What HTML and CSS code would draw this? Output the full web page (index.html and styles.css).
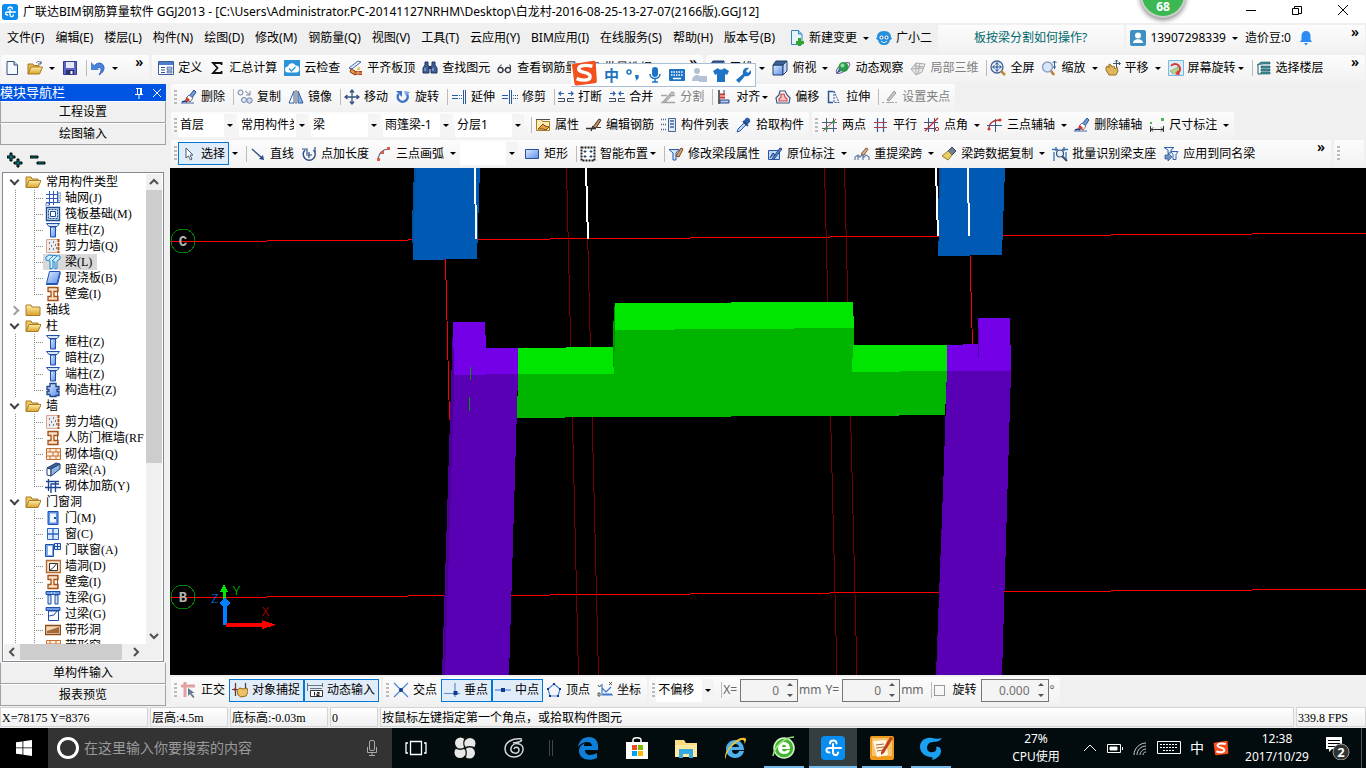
FILE: index.html
```html
<!DOCTYPE html>
<html lang="zh-CN">
<head>
  <meta charset="UTF-8" />
  <meta name="viewport" content="width=device-width, initial-scale=1.0" />
  <title>广联达BIM钢筋算量软件 GGJ2013</title>
  <link rel="stylesheet" href="styles.css">
</head>
<body>
  <svg class="sprite" aria-hidden="true">
    <defs>
      <linearGradient id="gBlue" x1="0" y1="0" x2="1" y2="1"><stop offset="0" stop-color="#dfeaff"/><stop offset="1" stop-color="#5b8fe8"/></linearGradient>
      <linearGradient id="gGold" x1="0" y1="0" x2="0" y2="1"><stop offset="0" stop-color="#fff0a8"/><stop offset="1" stop-color="#d9a02c"/></linearGradient>
    </defs>
    <!-- file -->
    <symbol id="i-new" viewBox="0 0 16 16"><path d="M3 1.500h7l3.500 3.500v9.500H3z" fill="#f5f8fd" stroke="#33507e"/><path d="M10 1.500v3.500h3.500" fill="#c8d7ee" stroke="#33507e"/></symbol>
    <symbol id="i-open" viewBox="0 0 16 16"><path d="M1 14V4h5l1 1.500h5V8" fill="#e8b850" stroke="#a87820"/><path d="M1 14l3-7h11.500l-3 7z" fill="url(#gGold)" stroke="#a87820"/><path d="M9 3c2-2.500 4-1.500 5 .5m0-2.500v3h-3" fill="none" stroke="#4c5f7c"/></symbol>
    <symbol id="i-save" viewBox="0 0 16 16"><path d="M1.500 1.500h13v13h-13z" fill="#5a63c8" stroke="#343a8c"/><path d="M4 2h8v6H4z" fill="#e4e8fb"/><path d="M4 10h8v4H4z" fill="#2c3270"/><path d="M8.500 11h2v3h-2z" fill="#fff"/></symbol>
    <symbol id="i-undo" viewBox="0 0 16 16"><path d="M4 6c4-5 10-3 10 2 0 3-2 5-5 7 4-6 2-9-2.500-6.500" fill="#4b83d8" stroke="#2f64ba"/><path d="M1 2v8h8z" fill="#4b83d8"/></symbol>
    <!-- common tools -->
    <symbol id="i-define" viewBox="0 0 16 16"><path d="M.5 1.500h15v13H.5z" fill="#fff" stroke="#3c5f99"/><path d="M1 2h14v3H1z" fill="#4a7cc9"/><path d="M3 7.500h4M3 10h4M3 12.500h4" stroke="#33508a"/><path d="M9 7h5v3H9zM9 11h5v2H9z" fill="#a8bfe6" stroke="#33508a" stroke-width=".6"/></symbol>
    <symbol id="i-sum" viewBox="0 0 16 16"><path d="M12.500 5V3H4l4.500 5L4 13h8.500v-2" fill="none" stroke="#111" stroke-width="1.800"/></symbol>
    <symbol id="i-cloud" viewBox="0 0 16 16"><path d="M0 0h16v16H0z" fill="#2d93d8"/><path d="M4 12.500a3 3 0 0 1 0-6 4 4 0 0 1 7.500-1 3.500 3.500 0 0 1 .5 7z" fill="#fff"/><path d="M5 8.500l2.500 2.500 4-4" fill="none" stroke="#2d93d8" stroke-width="1.300"/></symbol>
    <symbol id="i-flush" viewBox="0 0 16 16"><path d="M2 8l9-7 3 1-9 7z" fill="#e6eefc" stroke="#4669a8"/><path d="M4 9l4 2v4l-5-3z" fill="#e9a13c" stroke="#8d3b14"/><path d="M8 11h7v4H8z" fill="#b4441c"/><path d="M8 13h7M11 11v4" stroke="#ffd9a0" stroke-width=".7"/><path d="M10 8l3-1v3h-3z" fill="#f4c44c"/></symbol>
    <symbol id="i-find" viewBox="0 0 16 16"><path d="M3 2h3v3l1 2v6H1V8l2-3zM10 2h3v3l2 3v5H9V7l1-2z" fill="#3c5f96" stroke="#20365e"/><path d="M7 6h2v3H7z" fill="#20365e"/><path d="M3 8v3M11 8v3" stroke="#a8c4ee"/></symbol>
    <symbol id="i-glasses" viewBox="0 0 16 16"><circle cx="3.500" cy="10" r="2.500" fill="#fff" stroke="#303845" stroke-width="1.300"/><circle cx="11" cy="10" r="2.500" fill="#fff" stroke="#303845" stroke-width="1.300"/><path d="M6 10h2.500M2 8c1-3 2-3 3-3M13 9c1-3 1-4-1-4" fill="none" stroke="#303845"/></symbol>
    <symbol id="i-batch" viewBox="0 0 16 16"><path d="M1 3h5M8 3h7M1 8h5M8 8h7M1 13h5M8 13h7" stroke="#6a7484" stroke-width="2"/></symbol>
    <symbol id="i-box" viewBox="0 0 16 16"><path d="M1 5h10v10H1z" fill="url(#gBlue)" stroke="#23406e"/><path d="M1 5l3-4h11l-4 4z" fill="#3d5f94" stroke="#23406e"/><path d="M11 5l4-4v10l-4 4z" fill="#c4d8f5" stroke="#23406e"/></symbol>
    <symbol id="i-orbit" viewBox="0 0 16 16"><ellipse cx="8" cy="8" rx="8" ry="3.500" transform="rotate(-35 8 8)" fill="none" stroke="#7b5a9a"/><circle cx="8.500" cy="7" r="5" fill="#2c9a4c"/><circle cx="7.500" cy="5.500" r="2" fill="#8fe0a0"/><path d="M1 14l5-3-2-2z" fill="#30549a"/></symbol>
    <symbol id="i-local" viewBox="0 0 16 16"><path d="M1 9l5-6 9 1-3 8-6 3z" fill="#ececec" stroke="#aaa"/><path d="M6 3v12M10 3L8 14M2 9l11-1M4 6l10 1" fill="none" stroke="#aaa"/></symbol>
    <symbol id="i-full" viewBox="0 0 16 16"><circle cx="7" cy="7" r="6" fill="#edf4ff" stroke="#44618e" stroke-width="1.300"/><path d="M7 3v8M3 7h8M5.500 4.500L7 2.500l1.500 2M5.500 9.500L7 11.500l1.500-2M4.500 5.500L2.500 7l2 1.500M9.500 5.500l2 1.500-2 1.500" fill="none" stroke="#1f4e96"/><path d="M11 11l4 4" stroke="#c58a38" stroke-width="2.500"/></symbol>
    <symbol id="i-zoom" viewBox="0 0 16 16"><circle cx="6.500" cy="7" r="5" fill="#d7e7fb" stroke="#8ba2c4" stroke-width="1.500"/><path d="M10 11l3 4" stroke="#c07a30" stroke-width="2.500"/><path d="M13.500 1v8M11.500 3l2-2 2 2M12 7h3" fill="none" stroke="#33588f"/></symbol>
    <symbol id="i-pan" viewBox="0 0 16 16"><path d="M1 7l2-1 1 2V4l2 1 1 2 2-1 1 3 2-2 1 4-2 4H4L1 10z" fill="#dfb65a" stroke="#9a7428"/><path d="M11.500 0v8M8 3.500h7M10 1.500L11.500 0 13 1.500M14 2l1.500 1.500L14 5" fill="none" stroke="#44536e"/></symbol>
    <symbol id="i-screen" viewBox="0 0 16 16"><path d="M.5.5h15v15H.5z" fill="#d9edf9" stroke="#7ab6dd"/><path d="M3 6a5 5 0 1 1 7 7" fill="none" stroke="#d63a34" stroke-width="2"/><path d="M2 11l8-4v4l-5 3z" fill="#b8d48a" stroke="#7fa050" stroke-width=".6"/><path d="M7 14.500l5 .5-2-5z" fill="#d63a34"/></symbol>
    <symbol id="i-floor" viewBox="0 0 16 16"><path d="M1 5l4-3h9v2H7zM5 6h9v2H5zM5 9h9v2H5zM5 12h9v2H5z" fill="#3f8f98" stroke="#205c66" stroke-width=".6"/><path d="M2 5v9h3" fill="none" stroke="#205c66"/></symbol>
    <!-- account -->
    <symbol id="i-change" viewBox="0 0 16 16"><path d="M2.500.5h7l3.500 3.500v10.500H2.500z" fill="#e4f3fd" stroke="#3585bd"/><path d="M9.500.5V4H13" fill="#9fd0ee" stroke="#3585bd"/><path d="M9 8h3v3h3v3h-3v2H9v-2H7v-3h2z" fill="#34a52a"/></symbol>
    <symbol id="i-helper" viewBox="0 0 16 16"><path d="M8 1c5 0 7 3 7 6l1 2-2 1c-1 4-3 5-6 5s-5-1-6-5L0 9l1-2c0-3 2-6 7-6z" fill="#2590dd"/><circle cx="5.500" cy="7.500" r="2" fill="#fff"/><circle cx="10.500" cy="7.500" r="2" fill="#fff"/><circle cx="5.500" cy="7.500" r="1" fill="#12508a"/><circle cx="10.500" cy="7.500" r="1" fill="#12508a"/><path d="M5 11c2 2 4 2 6 0" fill="none" stroke="#fff"/></symbol>
    <symbol id="i-user" viewBox="0 0 16 16"><rect width="16" height="16" rx="2" fill="#3e8fc4"/><circle cx="8" cy="5.500" r="3" fill="#fff"/><path d="M3 13c0-5 10-5 10 0z" fill="#fff"/></symbol>
    <symbol id="i-bell" viewBox="0 0 16 16"><path d="M8 1c3 0 4.500 2 4.500 5v3.500L14 12H2l1.500-2.500V6C3.500 3 5 1 8 1z" fill="#2d8cf0"/><path d="M6 13h4l-2 2.500z" fill="#2d8cf0"/></symbol>
    <!-- edit -->
    <symbol id="i-erase" viewBox="0 0 16 16"><path d="M8 7l5-6 2 2-4 6z" fill="#6d9bdc" stroke="#2c5595"/><path d="M5 9l3-3 4 3-3 4z" fill="#fff" stroke="#60708a"/><path d="M4 11l3 2 2-2-3-3z" fill="#d63a2a"/><path d="M0 14h13" stroke="#7c95bd" stroke-width="1.500"/><path d="M1 13l3-1 2 1" fill="none" stroke="#23447c" stroke-width="1.500"/></symbol>
    <symbol id="i-copy" viewBox="0 0 16 16"><circle cx="3.500" cy="3.500" r="2.500" fill="#eef3fb" stroke="#6a7f9f"/><circle cx="7" cy="11" r="2.500" fill="#dfe8f6" stroke="#6a7f9f"/><circle cx="12.500" cy="11.500" r="2.700" fill="#cfdcef" stroke="#6a7f9f"/><path d="M8 2l5 4M13 2v4H9" fill="none" stroke="#7a8699"/></symbol>
    <symbol id="i-mirror" viewBox="0 0 16 16"><path d="M6 2v12H1z" fill="#fff" stroke="#2f599c"/><path d="M10 2v12h5z" fill="#8db1ea" stroke="#2f599c"/><path d="M8 1v14" stroke="#555"/></symbol>
    <symbol id="i-move" viewBox="0 0 16 16"><path d="M8 1v14M1 8h14M6 3.500L8 1l2 2.500M6 12.500L8 15l2-2.500M3.500 6L1 8l2.500 2M12.500 6L15 8l-2.500 2" fill="none" stroke="#35547f" stroke-width="1.300"/></symbol>
    <symbol id="i-rotate" viewBox="0 0 16 16"><path d="M3.500 5a5 5 0 1 0 8-.5" fill="none" stroke="#3f74c6" stroke-width="2.500"/><path d="M1 2h6v6z" fill="#3f74c6"/><path d="M9 2l6 1-4 4z" fill="#7aa4e4"/></symbol>
    <symbol id="i-extend" viewBox="0 0 16 16"><path d="M1 6.500h6M1 9.500h6" stroke="#2b579b"/><path d="M8 6.500h3M8 9.500h3" stroke="#2b579b" stroke-dasharray="1 1"/><path d="M12.500 1v14M14.500 1v14" stroke="#2b579b"/></symbol>
    <symbol id="i-trim" viewBox="0 0 16 16"><path d="M0 6.500h6M0 9.500h6" stroke="#2b579b"/><path d="M7.500 1v14M9.500 1v14" stroke="#2b579b"/><path d="M11 6.500h5M11 9.500h5" stroke="#2b579b" stroke-dasharray="1 1"/></symbol>
    <symbol id="i-break" viewBox="0 0 16 16"><path d="M1 4.500h5M10 4.500h5M3 2.500l-2 2 2 2M13 2.500l2 2-2 2" fill="none" stroke="#2f5fb0" stroke-width="1.200"/><path d="M0 9.500h6.500v3H0M16 9.500H9.500v3H16" fill="none" stroke="#3b4963"/></symbol>
    <symbol id="i-merge" viewBox="0 0 16 16"><path d="M1 4.500h5M10 4.500h5M4 2.500l2 2-2 2M12 2.500l-2 2 2 2" fill="none" stroke="#2f5fb0" stroke-width="1.200"/><path d="M0 9.500h6.500v3H0M16 9.500H9.500v3H16" fill="none" stroke="#3b4963"/></symbol>
    <symbol id="i-split" viewBox="0 0 16 16"><path d="M1 6.500h6M1 13.500h14M10 6.500h5M3 13L12 3l2 1-9 9" fill="none" stroke="#a5a5a5" stroke-width="1.400"/></symbol>
    <symbol id="i-align" viewBox="0 0 16 16"><path d="M3 1v14" stroke="#111" stroke-width="1.300"/><path d="M4 5.500h5M4 8.500h5" stroke="#d22f2f" stroke-width="2"/><path d="M4 11h9v3H4z" fill="#b8cdf0" stroke="#22438a"/><path d="M8 1v4" stroke="#22438a"/></symbol>
    <symbol id="i-offset" viewBox="0 0 16 16"><path d="M5 2h5l2 4 3 3-1 5H2l-1-5 3-3z" fill="#fff" stroke="#35537f" stroke-width="1.200"/><path d="M6 5h3l1 3 2 2v2H4v-2l2-2z" fill="#f8c8c8" stroke="#d04343" stroke-width="1.200"/></symbol>
    <symbol id="i-stretch" viewBox="0 0 16 16"><path d="M7 2.500H2.500v11H7" fill="none" stroke="#2c5595" stroke-width="1.500"/><path d="M8 2l5 11.500H8z" fill="none" stroke="#2c5595" stroke-dasharray="2 1"/></symbol>
    <symbol id="i-pin" viewBox="0 0 16 16"><path d="M0 13.500h2M4 13.500h8M13 13.500h2" stroke="#a8a8a8"/><path d="M5 11l7-9 2 2-7 8z" fill="#c6c6c6" stroke="#999"/></symbol>
    <!-- component -->
    <symbol id="i-prop" viewBox="0 0 16 16"><path d="M1.500 2.500h5l1 2h7v9h-13z" fill="#ffe9ae" stroke="#ad7b22"/><path d="M3 12l5-5 2 2 4 1-3 3-3-1z" fill="#e8a040" stroke="#7d4b10"/><path d="M1 2.500h14" stroke="#4f4f4f"/></symbol>
    <symbol id="i-rebar" viewBox="0 0 16 16"><path d="M0 11.500h10M5 14l2-5" fill="none" stroke="#333" stroke-width="1.300"/><path d="M7 10l6-8 2 1-5 8z" fill="#d98a4a" stroke="#333"/><path d="M11 10.500h4" stroke="#333"/></symbol>
    <symbol id="i-list" viewBox="0 0 16 16"><path d="M0 2.500h5M0 7.500h5M0 12.500h5" stroke="#45628f" stroke-width="1.500" stroke-dasharray="1 1"/><path d="M7.500 1.500h7v13h-7z" fill="#e3ecfa" stroke="#45628f"/><path d="M9 4h4M9 7h4M9 10h4" stroke="#45628f" stroke-width="1.500"/></symbol>
    <symbol id="i-pick" viewBox="0 0 16 16"><path d="M10 1c2-1 5 1 4 4l-3 3-4-3z" fill="#2d5cae"/><path d="M8 6l2 2-6 6-3 1 1-3z" fill="#b9d4f5" stroke="#2d5cae"/><path d="M7 4l5 5" stroke="#1c3c78" stroke-width="1.500"/></symbol>
    <symbol id="i-two" viewBox="0 0 16 16"><path d="M4.500 1v14M11.500 1v14M0 5.500h15M0 11.500h15" stroke="#4b5c7d"/><path d="M1 14L14 2" stroke="#bc3333"/><circle cx="4.500" cy="11.500" r="1.500" fill="#2f9d3e"/><circle cx="11.500" cy="5" r="1.500" fill="#2f9d3e"/></symbol>
    <symbol id="i-parallel" viewBox="0 0 16 16"><path d="M4.500 1v14M10.500 1v14" stroke="#2f549a" stroke-width="1.200"/><path d="M1 5.500h13M1 10.500h13" stroke="#a83d4d" stroke-width="1.200"/></symbol>
    <symbol id="i-angle" viewBox="0 0 16 16"><path d="M4.500 1v14M10.500 1v14M0 5.500h14M0 11.500h12" stroke="#3d5584"/><path d="M1 14L14 1" stroke="#c42828" stroke-width="1.300"/><circle cx="13" cy="12" r="1.700" fill="none" stroke="#c42828"/></symbol>
    <symbol id="i-arcaxis" viewBox="0 0 16 16"><path d="M2 12C2 5 7 3 14 3" fill="none" stroke="#c93333" stroke-width="1.300"/><path d="M8.500 2v13M0 8.500h15" stroke="#3d5584"/><circle cx="2" cy="12" r="1.500" fill="#c93333"/><circle cx="13" cy="3" r="1.500" fill="#c93333"/></symbol>
    <symbol id="i-dim" viewBox="0 0 16 16"><path d="M1.500 9v6M14.500 9v6M2 12.500h12M4 10.500l-2 2 2 2M12 10.500l2 2-2 2" fill="none" stroke="#333"/><path d="M1 5h2v2H1zM12 1h3v3h-3z" fill="#52b052"/></symbol>
    <!-- draw -->
    <symbol id="i-cursor" viewBox="0 0 16 16"><path d="M5 2v10l2.500-2 2 4 1.500-1-2-4h3z" fill="#fff" stroke="#4d5b70"/></symbol>
    <symbol id="i-line" viewBox="0 0 16 16"><path d="M2 3l10 9" stroke="#284a86" stroke-width="1.300"/><path d="M14 14l-5-1 4-4z" fill="#284a86"/></symbol>
    <symbol id="i-length" viewBox="0 0 16 16"><path d="M4 4a6 6 0 1 0 8.500 0" fill="none" stroke="#2d4d86" stroke-width="1.400"/><path d="M1 3h5v5M14 1v5M8 6v6M5 9h6" fill="none" stroke="#2d4d86" stroke-width="1.200"/></symbol>
    <symbol id="i-arc" viewBox="0 0 16 16"><path d="M2 13C3 7 7 3 13 3" fill="none" stroke="#44546e" stroke-width="1.200"/><path d="M1 12h3v3H1zM5 5h3v3H5zM11 1h3v3h-3z" fill="#e25a4a"/></symbol>
    <symbol id="i-rect" viewBox="0 0 16 16"><path d="M1.500 3.500h13v9h-13z" fill="url(#gBlue)" stroke="#2c4e98"/></symbol>
    <symbol id="i-smart" viewBox="0 0 16 16"><path d="M1.500 1.500h13v13h-13z" fill="#fff" stroke="#222" stroke-width="2" stroke-dasharray="2 1"/><path d="M5 4v3M3.500 5.500h3M11 4v3M9.500 5.500h3M5 9v3M3.500 10.500h3M11 9v3M9.500 10.500h3" stroke="#28476f"/></symbol>
    <symbol id="i-beamedit" viewBox="0 0 16 16"><path d="M1 3.500h10L8 7v7H5V7z" fill="#cfe3fb" stroke="#2a5ca6"/><path d="M8 10l5-8 2 1-4 8z" fill="#e4a068" stroke="#6b4a2c"/></symbol>
    <symbol id="i-mark" viewBox="0 0 16 16"><path d="M1.500 4.500h11v9h-11z" fill="#bcd4f6" stroke="#2a56a0"/><path d="M3 12l3-5 2 2M5 13L13 2l2 1-8 10" fill="#5c8bd6" stroke="#20417a"/></symbol>
    <symbol id="i-span" viewBox="0 0 16 16"><path d="M1 14v-3l3-2 2 2 2-2 2 2 2-2 3 2v3M4 9v5M9 9v5" fill="none" stroke="#6b87ae" stroke-width="1.300"/><path d="M7 8l5-6 2 1-4 6z" fill="#e4b08a" stroke="#7a5c44"/></symbol>
    <symbol id="i-brush" viewBox="0 0 16 16"><path d="M11 1l4 4-4 4-4-4z" fill="#6d7d97" stroke="#3c4a60"/><path d="M7 5l4 4-4 5-6-4z" fill="#e9cf6a" stroke="#9a7a24"/></symbol>
    <symbol id="i-seat" viewBox="0 0 16 16"><path d="M0 3.500h6M10 3.500h6M2 6v9M14 6v9M4 1v4M12 1v4" stroke="#3572b8" stroke-width="1.300"/><circle cx="8" cy="7.500" r="3.500" fill="#e4f0fc" stroke="#38506f" stroke-width="1.200"/><path d="M10 10l5 5" stroke="#38506f" stroke-width="2"/></symbol>
    <symbol id="i-apply" viewBox="0 0 16 16"><path d="M1 1.500h10L8 4v3H5V4zM8 5.500h7l-2 3v5h-3v-5z" fill="#eaf2fd" stroke="#3565a8"/><path d="M2 9h3V7l4 4-4 4v-2H2z" fill="#6f93c9" stroke="#2c4f86" stroke-width=".7"/></symbol>
    <!-- snap -->
    <symbol id="i-ortho" viewBox="0 0 16 16"><path d="M0 4h14M4 0v15" stroke="#e0a0a0" stroke-width="3"/><path d="M7 6v8l2-2 3 4 1.500-1-3-4h3z" fill="#66788f"/></symbol>
    <symbol id="i-snap" viewBox="0 0 16 16"><path d="M3.500 1v13M13.500 1v9M0 7.500h16" stroke="#5d3434" stroke-width="1.200"/><path d="M1 7.500L4 5v5z" fill="#8d3434"/><path d="M5 8l3-2 3 1 4-1 1 4-2 4-5 1-3-2z" fill="#ecc063" stroke="#956c20"/></symbol>
    <symbol id="i-dyn" viewBox="0 0 16 16"><path d="M.5 1v8M15.500 1v4M1 3.500h15M3 6.500h12" stroke="#6c7480"/><path d="M3.500 8.500h12v6h-12z" fill="#fff" stroke="#333"/><path d="M7.500 10v3.500M10 10.500h2v1.500h-2v1.500h2.500" fill="none" stroke="#222" stroke-width="1.100"/></symbol>
    <symbol id="i-cross" viewBox="0 0 16 16"><path d="M1 1l14 14M15 1L1 15" stroke="#4a86d8" stroke-width="1.200"/><circle cx="8" cy="8" r="2" fill="#123a8c"/></symbol>
    <symbol id="i-perp" viewBox="0 0 16 16"><path d="M0 11.500h16M11 1v14" stroke="#5a8ed2" stroke-width="1.200"/><path d="M9.500 9h4v4h-4z" fill="#123a8c"/></symbol>
    <symbol id="i-mid" viewBox="0 0 16 16"><path d="M0 8h16" stroke="#4a86d8" stroke-width="1.200"/><path d="M6 6h4v4H6z" fill="#123a8c"/></symbol>
    <symbol id="i-vertex" viewBox="0 0 16 16"><path d="M8 2l6 5-2 7H4L2 7z" fill="none" stroke="#4a86d8" stroke-width="1.200"/><path d="M7 1h2v2H7zM1 6h2v2H1zM13 6h2v2h-2zM3 13h2v2H3zM11 13h2v2h-2z" fill="#123a8c"/></symbol>
    <symbol id="i-coord" viewBox="0 0 16 16"><path d="M5 2v11h11M5 6l4 4 5-5M6 12h9" fill="none" stroke="#3a78cc" stroke-width="1.200"/><path d="M1 3l1.500 2L4 3M1 11h2v3H1zM12 0l3 3M15 0l-3 3" fill="none" stroke="#333" stroke-width=".8"/></symbol>
    <!-- tree -->
    <symbol id="t-open" viewBox="0 0 16 16"><path d="M1 13V3h5l1 2h6v3" fill="#f0c860" stroke="#a87c28"/><path d="M1 13.500l3-7h12l-3 7z" fill="url(#gGold)" stroke="#a87c28"/></symbol>
    <symbol id="t-closed" viewBox="0 0 16 16"><path d="M1 13.500V3h5l1 2h8v8.500z" fill="url(#gGold)" stroke="#a87c28"/></symbol>
    <symbol id="t-grid" viewBox="0 0 16 16"><path d="M4.500 1v14M8.500 1v14M12.500 1v11M1 4.500h11M1 8.500h11M1 12.500h14" stroke="#2e5bb8"/><path d="M13 3h3v3h-3zM13 8h3v3h-3zM1 13h3v3H1z" fill="none" stroke="#2e5bb8" stroke-width=".7"/></symbol>
    <symbol id="t-raft" viewBox="0 0 16 16"><path d="M1.500 1.500h13v13h-13z" fill="#dceafb" stroke="#1d4c90" stroke-width="1.400"/><path d="M5.500 5.500h5v5h-5z" fill="#fff" stroke="#1d4c90"/><path d="M3.500 3.500h9v9h-9z" fill="none" stroke="#1d4c90" stroke-dasharray="2 1"/></symbol>
    <symbol id="t-col" viewBox="0 0 16 16"><path d="M1.500 1.500h13L12 4.500H4z" fill="#d9e7fd" stroke="#1f4fa8"/><path d="M5.500 5v10h5V5z" fill="url(#gBlue)" stroke="#1f4fa8"/></symbol>
    <symbol id="t-shear" viewBox="0 0 16 16"><path d="M1.500 1.500h12v13h-12z" fill="#ececec" stroke="#d8a890"/><path d="M4 5h1M8 4h1M6 8h1M10 7h1M4 11h1M8 11h1M11 10h1" stroke="#555" stroke-width="1.300"/><path d="M13.500 1v14" stroke="#b25016" stroke-width="2" stroke-dasharray="3 1"/></symbol>
    <symbol id="t-beam" viewBox="0 0 16 16"><path d="M1 3l3-2 11 1v3l-3 2v7l-2 1V8L8 7v7l-3 1V7L1 6z" fill="#d3edfc" stroke="#2487c8"/><path d="M4 6l4-4M7 7l5-5" stroke="#2487c8"/></symbol>
    <symbol id="t-slab" viewBox="0 0 16 16"><path d="M4.500 1.500H15L12 13.500H1.500z" fill="url(#gBlue)" stroke="#1e55b4"/><path d="M1 14.500h11.500l3-12" fill="none" stroke="#1e55b4"/></symbol>
    <symbol id="t-niche" viewBox="0 0 16 16"><path d="M3 1.500h10v4H9v5h4v4H3v-4h3v-5H3z" fill="#fbdfc6" stroke="#a5531b" stroke-width="1.300"/><path d="M12.500 2v12" stroke="#a5531b"/></symbol>
    <symbol id="t-struct" viewBox="0 0 16 16"><path d="M5 1.500h6v3h3v3h-2v2h2v4h-3v1H5v-2H2v-3h2v-2H2v-3h3z" fill="url(#gBlue)" stroke="#1d458c" stroke-width="1.300"/></symbol>
    <symbol id="t-brick" viewBox="0 0 16 16"><path d="M1.500 2.500h14v11h-14z" fill="#fdf0dd" stroke="#c66f32"/><path d="M1 6h14M1 10h14M5 2v4M11 2v4M8 6v4M13 6v4M5 10v4M11 10v4" stroke="#c66f32"/></symbol>
    <symbol id="t-hidden" viewBox="0 0 16 16"><path d="M2 6l9-5 4 1-9 5z" fill="#3d6299" stroke="#1f3f73"/><path d="M2 6l4 1v7l-4-1z" fill="#fff" stroke="#1f3f73"/><path d="M6 7l9-5v5l-9 7z" fill="#8fb3e2" stroke="#1f3f73"/></symbol>
    <symbol id="t-tie" viewBox="0 0 16 16"><path d="M1 3.500h13M0 9.500h16M3.500 1v12M10.500 3v11M6 15V6h8" fill="none" stroke="#1c4390" stroke-width="1.300"/></symbol>
    <symbol id="t-door" viewBox="0 0 16 16"><path d="M3 1.500h10v13H3z" fill="#5d93e8" stroke="#1e4fa8"/><path d="M5 3.500h6v9H5z" fill="#f0f6ff"/><path d="M9 7h2v2H9z" fill="#1e4fa8"/></symbol>
    <symbol id="t-window" viewBox="0 0 16 16"><path d="M2.500 2.500h11v11h-11z" fill="#dceaff" stroke="#2b63c0"/><path d="M8 2v12M2 8h12" stroke="#2b63c0" stroke-width="1.300"/></symbol>
    <symbol id="t-dw" viewBox="0 0 16 16"><path d="M.5 2.500h8v12h-8z" fill="#7fa9ee" stroke="#1e4fa8"/><path d="M3 4h4v9H3z" fill="#fff"/><path d="M9.500 1.500h6v6h-6zM12.500 1v7M9 4.500h7" fill="#dceaff" stroke="#1e4fa8"/></symbol>
    <symbol id="t-hole" viewBox="0 0 16 16"><path d="M1.500 2.500h14v12h-14z" fill="#fbe3c8" stroke="#b56a32" stroke-width="1.400"/><path d="M4.500 5.500h8v7h-8z" fill="#fff" stroke="#333"/><path d="M4 13l5-4 3-4" fill="none" stroke="#333"/></symbol>
    <symbol id="t-link" viewBox="0 0 16 16"><path d="M1 1.500h14v3H1z" fill="#6d9ae0" stroke="#1e4fa8"/><path d="M3 5h3v9H3zM10 5h3v9h-3z" fill="#c8dcfb" stroke="#1e4fa8"/><path d="M6 3h1M9 3h1" stroke="#fff"/></symbol>
    <symbol id="t-lintel" viewBox="0 0 16 16"><path d="M1 1.500h14v3H1z" fill="#6d9ae0" stroke="#1e4fa8"/><path d="M3.500 5h10v9.500h-10z" fill="#fff" stroke="#1e4fa8"/><path d="M4 10l5-1 3-4" fill="none" stroke="#1e4fa8"/></symbol>
    <symbol id="t-strip" viewBox="0 0 16 16"><path d="M.5 3.500h15v9H.5z" fill="#f4d7b5" stroke="#8b4a18" stroke-width="1.400"/><path d="M2 9l12-4v6H2z" fill="#a5683a"/></symbol>
    <!-- logos -->
    <symbol id="l-app" viewBox="0 0 24 24"><rect width="24" height="24" rx="4" fill="#0a8df0"/><path d="M9 7.500c0-4 6.500-4 6.500 0M12 8v8c0 4 5 4 5 .5M20 12H8.500c-4 0-4 4.500 0 4.500" fill="none" stroke="#fff" stroke-width="2" stroke-linecap="round"/></symbol>
    <symbol id="l-sogou" viewBox="0 0 24 24"><path d="M2 4L20 1q2 0 2 2l1 16q0 2-2 2L5 23q-2 0-2-2L1 6q-1-2 1-2z" fill="#f4501e"/><path d="M19 6C11 4 6 6 7 9s10 2 10 6-7 4-12 2" fill="none" stroke="#fff" stroke-width="3"/></symbol>
    <symbol id="l-ie" viewBox="0 0 24 24"><path d="M21 15c-1 4-4 7-9 7-5 0-9-4-9-9s4-9 9-9 9 4 9 10H9c0 5 6 5 7 1zM9 11h7c0-4-7-4-7 0z" fill="#4db1f0"/><path d="M3 23C-2 19 13-1 22 2c2 1 1 4-1 6 1-3 0-4-2-4C13 5 2 16 3 23z" fill="#f2c12e"/></symbol>
  </svg>

  <div class="window">
    <header class="titlebar">
      <svg class="icon"><use href="#l-app"/></svg>
      <h1>广联达BIM钢筋算量软件 GGJ2013 - [C:\Users\Administrator.PC-20141127NRHM\Desktop\白龙村-2016-08-25-13-27-07(2166版).GGJ12]</h1>
      <div class="window-controls">
        <button aria-label="最小化"><svg viewBox="0 0 12 12"><path d="M1 6.500h10"/></svg></button>
        <button aria-label="还原"><svg viewBox="0 0 12 12"><path d="M1.500 4.500h6v6h-6zM3.500 4.500v-2h7v7h-3"/></svg></button>
        <button aria-label="关闭"><svg viewBox="0 0 12 12"><path d="M1 1l10 10M11 1L1 11"/></svg></button>
      </div>
      <div class="speed-ball">68</div>
    </header>

    <nav class="row menu-row">
      <div class="menus">
        <button>文件(F)</button><button>编辑(E)</button><button>楼层(L)</button><button>构件(N)</button><button>绘图(D)</button><button>修改(M)</button><button>钢筋量(Q)</button><button>视图(V)</button><button>工具(T)</button><button>云应用(Y)</button><button>BIM应用(I)</button><button>在线服务(S)</button><button>帮助(H)</button><button>版本号(B)</button>
      </div>
      <button class="tool split"><svg class="icon"><use href="#i-change"/></svg>新建变更</button>
      <button class="tool"><svg class="icon"><use href="#i-helper"/></svg>广小二</button>
      <div class="panel tip"><a href="#">板按梁分割如何操作?</a></div>
      <div class="panel account">
        <button class="tool split"><svg class="icon"><use href="#i-user"/></svg>13907298339</button>
        <button class="tool">造价豆:0</button>
        <button class="tool" aria-label="消息"><svg class="icon"><use href="#i-bell"/></svg></button>
        <button class="more" aria-label="更多">»</button>
      </div>
    </nav>

    <div class="row file-row">
      <div class="panel file-tools">
        <button class="tool" aria-label="新建"><svg class="icon"><use href="#i-new"/></svg></button>
        <button class="tool split" aria-label="打开"><svg class="icon"><use href="#i-open"/></svg></button>
        <button class="tool" aria-label="保存"><svg class="icon"><use href="#i-save"/></svg></button>
        <span class="sep"></span>
        <button class="tool split" aria-label="撤销"><svg class="icon"><use href="#i-undo"/></svg></button>
        <button class="more" aria-label="更多">»</button>
      </div>
      <div class="panel common-tools">
        <button class="tool"><svg class="icon"><use href="#i-define"/></svg>定义</button>
        <button class="tool"><svg class="icon"><use href="#i-sum"/></svg>汇总计算</button>
        <button class="tool"><svg class="icon"><use href="#i-cloud"/></svg>云检查</button>
        <button class="tool"><svg class="icon"><use href="#i-flush"/></svg>平齐板顶</button>
        <button class="tool"><svg class="icon"><use href="#i-find"/></svg>查找图元</button>
        <button class="tool"><svg class="icon"><use href="#i-glasses"/></svg>查看钢筋量</button>
        <button class="tool"><svg class="icon"><use href="#i-batch"/></svg>批量选择</button>
        <button class="more" aria-label="更多">»</button>
      </div>
      <div class="panel view-tools">
        <button class="tool split"><svg class="icon"><use href="#i-box"/></svg>三维</button>
        <button class="tool split"><svg class="icon"><use href="#i-box"/></svg>俯视</button>
        <button class="tool"><svg class="icon"><use href="#i-orbit"/></svg>动态观察</button>
        <button class="tool off"><svg class="icon"><use href="#i-local"/></svg>局部三维</button>
        <span class="sep"></span>
        <button class="tool"><svg class="icon"><use href="#i-full"/></svg>全屏</button>
        <button class="tool split"><svg class="icon"><use href="#i-zoom"/></svg>缩放</button>
        <button class="tool split"><svg class="icon"><use href="#i-pan"/></svg>平移</button>
        <button class="tool drop"><svg class="icon"><use href="#i-screen"/></svg>屏幕旋转</button>
        <span class="sep"></span>
        <button class="tool"><svg class="icon"><use href="#i-floor"/></svg>选择楼层</button>
        <button class="more" aria-label="更多">»</button>
      </div>
    </div>

    <div class="body">
      <aside class="sidebar">
        <div class="side-title">
          <h2>模块导航栏</h2>
          <button aria-label="固定"><svg viewBox="0 0 12 12"><path d="M3 1.500h6M4.500 2v5M7.500 2v5M8.500 2v5M2 7.500h8M6 8v4"/></svg></button>
          <button aria-label="关闭"><svg viewBox="0 0 12 12"><path d="M2 2l8 8M10 2l-8 8"/></svg></button>
        </div>
        <button class="side-tab">工程设置</button>
        <button class="side-tab">绘图输入</button>
        <div class="side-tools">
          <button aria-label="全部展开"><svg viewBox="0 0 16 16"><path d="M3 1h2v3h3v2H5v3H3V6H0V4h3zM10 7h2v3h3v2h-3v3h-2v-3H7v-2h3z"/></svg></button>
          <button aria-label="全部折叠"><svg viewBox="0 0 16 16"><path d="M0 4h8v2H0zM7 10h8v2H7z"/></svg></button>
        </div>
        <div class="tree">
          <ul class="nodes">
            <li>
              <button class="node"><span class="chevron open"></span><svg class="icon"><use href="#t-open"/></svg>常用构件类型</button>
              <ul>
                <li><button><svg class="icon"><use href="#t-grid"/></svg>轴网(J)</button></li>
                <li><button><svg class="icon"><use href="#t-raft"/></svg>筏板基础(M)</button></li>
                <li><button><svg class="icon"><use href="#t-col"/></svg>框柱(Z)</button></li>
                <li><button><svg class="icon"><use href="#t-shear"/></svg>剪力墙(Q)</button></li>
                <li><button class="selected"><svg class="icon"><use href="#t-beam"/></svg>梁(L)</button></li>
                <li><button><svg class="icon"><use href="#t-slab"/></svg>现浇板(B)</button></li>
                <li><button><svg class="icon"><use href="#t-niche"/></svg>壁龛(I)</button></li>
              </ul>
            </li>
            <li><button class="node"><span class="chevron"></span><svg class="icon"><use href="#t-closed"/></svg>轴线</button></li>
            <li>
              <button class="node"><span class="chevron open"></span><svg class="icon"><use href="#t-open"/></svg>柱</button>
              <ul>
                <li><button><svg class="icon"><use href="#t-col"/></svg>框柱(Z)</button></li>
                <li><button><svg class="icon"><use href="#t-col"/></svg>暗柱(Z)</button></li>
                <li><button><svg class="icon"><use href="#t-col"/></svg>端柱(Z)</button></li>
                <li><button><svg class="icon"><use href="#t-struct"/></svg>构造柱(Z)</button></li>
              </ul>
            </li>
            <li>
              <button class="node"><span class="chevron open"></span><svg class="icon"><use href="#t-open"/></svg>墙</button>
              <ul>
                <li><button><svg class="icon"><use href="#t-shear"/></svg>剪力墙(Q)</button></li>
                <li><button><svg class="icon"><use href="#t-niche"/></svg>人防门框墙(RF</button></li>
                <li><button><svg class="icon"><use href="#t-brick"/></svg>砌体墙(Q)</button></li>
                <li><button><svg class="icon"><use href="#t-hidden"/></svg>暗梁(A)</button></li>
                <li><button><svg class="icon"><use href="#t-tie"/></svg>砌体加筋(Y)</button></li>
              </ul>
            </li>
            <li>
              <button class="node"><span class="chevron open"></span><svg class="icon"><use href="#t-open"/></svg>门窗洞</button>
              <ul>
                <li><button><svg class="icon"><use href="#t-door"/></svg>门(M)</button></li>
                <li><button><svg class="icon"><use href="#t-window"/></svg>窗(C)</button></li>
                <li><button><svg class="icon"><use href="#t-dw"/></svg>门联窗(A)</button></li>
                <li><button><svg class="icon"><use href="#t-hole"/></svg>墙洞(D)</button></li>
                <li><button><svg class="icon"><use href="#t-niche"/></svg>壁龛(I)</button></li>
                <li><button><svg class="icon"><use href="#t-link"/></svg>连梁(G)</button></li>
                <li><button><svg class="icon"><use href="#t-lintel"/></svg>过梁(G)</button></li>
                <li><button><svg class="icon"><use href="#t-strip"/></svg>带形洞</button></li>
                <li><button><svg class="icon"><use href="#t-brick"/></svg>带形窗</button></li>
              </ul>
            </li>
          </ul>
          <div class="scroll vertical">
            <svg viewBox="0 0 16 16"><path d="M4 10l4-4 4 4"/></svg>
            <span class="thumb"></span>
            <svg viewBox="0 0 16 16"><path d="M4 6l4 4 4-4"/></svg>
          </div>
          <div class="scroll horizontal">
            <svg viewBox="0 0 16 16"><path d="M10 4L6 8l4 4"/></svg>
            <span class="thumb"></span>
            <svg viewBox="0 0 16 16"><path d="M6 4l4 4-4 4"/></svg>
          </div>
        </div>
        <button class="side-tab">单构件输入</button>
        <button class="side-tab">报表预览</button>
      </aside>

      <main class="workspace">
        <div class="row edit-row">
          <div class="panel">
            <span class="grip"></span>
            <button class="tool"><svg class="icon"><use href="#i-erase"/></svg>删除</button>
            <span class="sep"></span>
            <button class="tool"><svg class="icon"><use href="#i-copy"/></svg>复制</button>
            <button class="tool"><svg class="icon"><use href="#i-mirror"/></svg>镜像</button>
            <span class="sep"></span>
            <button class="tool"><svg class="icon"><use href="#i-move"/></svg>移动</button>
            <button class="tool"><svg class="icon"><use href="#i-rotate"/></svg>旋转</button>
            <span class="sep"></span>
            <button class="tool"><svg class="icon"><use href="#i-extend"/></svg>延伸</button>
            <button class="tool"><svg class="icon"><use href="#i-trim"/></svg>修剪</button>
            <span class="sep"></span>
            <button class="tool"><svg class="icon"><use href="#i-break"/></svg>打断</button>
            <button class="tool"><svg class="icon"><use href="#i-merge"/></svg>合并</button>
            <button class="tool off"><svg class="icon"><use href="#i-split"/></svg>分割</button>
            <span class="sep"></span>
            <button class="tool drop"><svg class="icon"><use href="#i-align"/></svg>对齐</button>
            <button class="tool"><svg class="icon"><use href="#i-offset"/></svg>偏移</button>
            <button class="tool"><svg class="icon"><use href="#i-stretch"/></svg>拉伸</button>
            <span class="sep"></span>
            <button class="tool off"><svg class="icon"><use href="#i-pin"/></svg>设置夹点</button>
          </div>
        </div>

        <div class="row component-row">
          <div class="panel">
            <span class="grip"></span>
            <select class="combo small" aria-label="楼层"><option>首层</option></select>
            <select class="combo" aria-label="构件类型"><option>常用构件类型</option></select>
            <select class="combo" aria-label="构件"><option>梁</option></select>
            <select class="combo" aria-label="构件名称"><option>雨篷梁-1</option></select>
            <select class="combo" aria-label="分层"><option>分层1</option></select>
            <span class="sep"></span>
            <button class="tool"><svg class="icon"><use href="#i-prop"/></svg>属性</button>
            <button class="tool"><svg class="icon"><use href="#i-rebar"/></svg>编辑钢筋</button>
            <button class="tool"><svg class="icon"><use href="#i-list"/></svg>构件列表</button>
            <button class="tool"><svg class="icon"><use href="#i-pick"/></svg>拾取构件</button>
          </div>
          <div class="panel">
            <span class="grip"></span>
            <button class="tool"><svg class="icon"><use href="#i-two"/></svg>两点</button>
            <button class="tool"><svg class="icon"><use href="#i-parallel"/></svg>平行</button>
            <button class="tool split"><svg class="icon"><use href="#i-angle"/></svg>点角</button>
            <button class="tool split"><svg class="icon"><use href="#i-arcaxis"/></svg>三点辅轴</button>
            <button class="tool"><svg class="icon"><use href="#i-erase"/></svg>删除辅轴</button>
            <button class="tool split"><svg class="icon"><use href="#i-dim"/></svg>尺寸标注</button>
          </div>
        </div>

        <div class="row draw-row">
          <div class="panel grow">
            <span class="grip"></span>
            <button class="tool pressed"><svg class="icon"><use href="#i-cursor"/></svg>选择</button>
            <button class="tool arrow-only" aria-label="选择方式"></button>
            <span class="sep"></span>
            <button class="tool"><svg class="icon"><use href="#i-line"/></svg>直线</button>
            <button class="tool"><svg class="icon"><use href="#i-length"/></svg>点加长度</button>
            <button class="tool split"><svg class="icon"><use href="#i-arc"/></svg>三点画弧</button>
            <select class="combo small" aria-label="半径"><option></option></select>
            <button class="tool"><svg class="icon"><use href="#i-rect"/></svg>矩形</button>
            <span class="sep"></span>
            <button class="tool drop"><svg class="icon"><use href="#i-smart"/></svg>智能布置</button>
            <span class="sep"></span>
            <button class="tool"><svg class="icon"><use href="#i-beamedit"/></svg>修改梁段属性</button>
            <button class="tool split"><svg class="icon"><use href="#i-mark"/></svg>原位标注</button>
            <button class="tool split"><svg class="icon"><use href="#i-span"/></svg>重提梁跨</button>
            <button class="tool split"><svg class="icon"><use href="#i-brush"/></svg>梁跨数据复制</button>
            <button class="tool"><svg class="icon"><use href="#i-seat"/></svg>批量识别梁支座</button>
            <button class="tool"><svg class="icon"><use href="#i-apply"/></svg>应用到同名梁</button>
            <button class="more" aria-label="更多">»</button>
          </div>
          <div class="panel stub"><span class="grip"></span></div>
        </div>

        <svg class="drawing" viewBox="170 168 1196 507" preserveAspectRatio="xMinYMin slice" shape-rendering="crispEdges">
          <path class="axis" d="M170 241.700L1366 233.200M170 597.700L1366 589.200M445.500 259L449.500 420M970 255L972.500 346"/>
          <path class="aux" d="M566.500 168L578.500 675M586 168L598.500 675M824.500 168L837 675M844.500 168L857 675"/>
          <!-- columns -->
          <path fill="#00509e" d="M414 168h4l-3 92h-2l-1-35z"/>
          <path fill="#005ab4" d="M416 168h64l-3 91-64 1z"/>
          <path fill="#00509e" d="M939 168h3l-2 60h-2z"/>
          <path fill="#005ab4" d="M941 168h64l-3 87-64 1z"/>
          <path class="select" d="M475 168L476 239M586 168L588 239M936 168L938 236M968 168L969 236"/>
          <!-- left wall -->
          <path fill="#4b0096" d="M453 322h4l-10 353h-5z"/>
          <path fill="#7300e6" d="M453 322h32l1 26h32v26l-64 1z"/>
          <path fill="#5a00b4" d="M454.500 375L518 374L509 675H445z"/>
          <path stroke="#009600" d="M470.500 367v13M469.500 397v14"/>
          <!-- right wall -->
          <path fill="#7300e6" d="M947 345l31-1v-26h32l1 53h-64z"/>
          <path fill="#4b0096" d="M978 327h1v31h-1zM947 360l-1 50-10 265h3z"/>
          <path fill="#5a00b4" d="M947 371h64l-9 304h-65z"/>
          <!-- beams -->
          <path fill="#00e600" d="M518 348l96-1v27h-96z"/>
          <path fill="#00b400" d="M518 374h96l-1 43-96 1z"/>
          <path fill="#00e600" d="M615 303l238-1 1 27-239 1z"/>
          <path fill="#00b400" d="M615 330l239-2-2 88-239 1z"/>
          <path fill="#009600" d="M614 306h1v46h-1l-1 30v-45z"/>
          <path fill="#00e600" d="M853 345h94v26l-95 1z"/>
          <path fill="#00b400" d="M852 372l95-1-2 44-93 1z"/>
          <!-- axis heads -->
          <circle class="head" cx="183" cy="241" r="12"/><circle class="head" cx="183" cy="597" r="12"/>
          <text class="head-text" x="183" y="246" text-anchor="middle">C</text>
          <text class="head-text" x="183" y="602" text-anchor="middle">B</text>
          <!-- coordinate triad -->
          <path fill="#00e600" d="M224 584l4 8h-8zM223 592h3v14h-3z"/>
          <path fill="#0080ff" d="M223 605h4v20h-4zM220 602l5-4 5 4v2l-5 4-5-4z"/>
          <path fill="#f00" d="M226 623h36v-3l14 5-14 4v-2h-36z"/>
          <text class="triad" x="233" y="595" fill="#00e600">Y</text>
          <text class="triad" x="211" y="603" fill="#0080ff">Z</text>
          <text class="triad" x="262" y="616" fill="#e00000">X</text>
        </svg>

        <div class="row snap-row">
          <div class="panel">
            <span class="grip"></span>
            <button class="tool"><svg class="icon"><use href="#i-ortho"/></svg>正交</button>
            <button class="tool pressed"><svg class="icon"><use href="#i-snap"/></svg>对象捕捉</button>
            <button class="tool pressed"><svg class="icon"><use href="#i-dyn"/></svg>动态输入</button>
          </div>
          <div class="panel">
            <span class="grip"></span>
            <button class="tool"><svg class="icon"><use href="#i-cross"/></svg>交点</button>
            <button class="tool pressed"><svg class="icon"><use href="#i-perp"/></svg>垂点</button>
            <button class="tool pressed"><svg class="icon"><use href="#i-mid"/></svg>中点</button>
            <button class="tool"><svg class="icon"><use href="#i-vertex"/></svg>顶点</button>
            <button class="tool"><svg class="icon"><use href="#i-coord"/></svg>坐标</button>
          </div>
          <div class="panel offsets">
            <span class="grip"></span>
            <select class="combo small" aria-label="偏移方式"><option>不偏移</option></select>
            <span class="sep"></span>
            <label for="offsetX">X=</label><input type="number" id="offsetX" value="0"><span class="unit">mm</span>
            <label for="offsetY">Y=</label><input type="number" id="offsetY" value="0"><span class="unit">mm</span>
            <span class="sep"></span>
            <input type="checkbox" id="rotate"><label class="rotate" for="rotate">旋转</label>
            <input type="number" class="wide" value="0.000" step="0.001" aria-label="旋转角度"><span class="unit">°</span>
          </div>
        </div>
      </main>
    </div>

    <footer class="status">
      <span class="coords">X=78175 Y=8376</span>
      <span class="height">层高:4.5m</span>
      <span class="bottom">底标高:-0.03m</span>
      <span class="count">0</span>
      <span class="hint">按鼠标左键指定第一个角点，或拾取构件图元</span>
      <span class="fps">339.8 FPS</span>
    </footer>

    <div class="ime">
      <svg class="ime-logo"><use href="#l-sogou"/></svg>
      <span>中</span>
      <svg viewBox="0 0 16 16"><circle cx="4" cy="5" r="2" fill="none" stroke="#1d74c4" stroke-width="1.500"/><path d="M10 8h3.500c1 3-1 5-3 6 1-1.500 1-2 0-3z"/></svg>
      <svg viewBox="0 0 16 16"><rect x="5" y="0" width="6" height="10" rx="3"/><path d="M3 7c0 6 10 6 10 0M8 12v3M5 15h6" fill="none" stroke="#1d74c4" stroke-width="1.500"/></svg>
      <svg viewBox="0 0 16 16"><rect y="2" width="16" height="12" rx="1"/><path d="M2 5h12M2 8h12" stroke="#fff" stroke-width="1.500" stroke-dasharray="1.500 1"/><path d="M4 11.500h8" stroke="#fff" stroke-width="1.500"/></svg>
      <svg viewBox="0 0 16 16" class="pale"><circle cx="6" cy="4" r="3"/><path d="M1 14c0-8 10-8 10 0zM8 9h8v6H8z"/></svg>
      <svg viewBox="0 0 16 16"><path d="M5 1c1 2 5 2 6 0l5 3-2 4-2-1v8H4V7L2 8 0 4z"/></svg>
      <svg viewBox="0 0 16 16"><path d="M1 13l7-6c-1-4 2-7 6-6l-3 3 2 2 3-3c1 4-2 7-6 6l-6 7z"/></svg>
    </div>

    <footer class="taskbar">
      <button class="start" aria-label="开始"><svg viewBox="0 0 16 16"><path d="M0 2.300L6.500 1.400V7.500H0zM7.300 1.300L16 0v7.500H7.300zM0 8.300h6.500v6.200L0 13.700zM7.300 8.300H16V16l-8.700-1.300z"/></svg></button>
      <div class="search">
        <svg class="cortana" viewBox="0 0 24 24"><circle cx="12" cy="12" r="9.500"/></svg>
        <input type="text" aria-label="搜索" placeholder="在这里输入你要搜索的内容">
        <svg class="mic" viewBox="0 0 12 16"><rect x="3.500" y=".5" width="5" height="10" rx="1.500"/><path d="M1.500 7v5.500h9V7M6 12.500V15M3 15.500h6"/></svg>
      </div>
      <div class="apps">
        <button aria-label="任务视图"><svg viewBox="0 0 24 24" fill="none" stroke="#fff" stroke-width="1.300"><path d="M6.500 5.500h11v13h-11zM4 7H2v10h2M20 7h2v10h-2"/></svg></button>
        <button aria-label="风扇"><svg viewBox="0 0 24 24" fill="#e8e8e8"><circle cx="7.500" cy="7" r="5.500"/><circle cx="17" cy="7.500" r="5.500"/><circle cx="7" cy="16.500" r="5.500"/><circle cx="16.500" cy="17" r="5.500"/><path d="M13 1c-3 4-3 7-1 11s2 7-1 11M1 11c4 3 7 3 11 1s7-2 11 1" fill="none" stroke="#101516" stroke-width="1.300"/></svg></button>
        <button aria-label="旋风"><svg viewBox="0 0 24 24" fill="none" stroke="#d8d8d8" stroke-width="1.500"><path d="M20 3C10 2 3 6 3 13c0 10 17 11 18 1 1-7-10-9-12-2-1 6 8 7 8 2 0-3-4-4-5-1"/><path d="M20 4c-2 3-6 2-9 3"/></svg></button>
        <span class="divider"></span>
        <button aria-label="Edge"><svg viewBox="0 0 24 24" fill="#0f80d8"><path d="M2 11C3 5 7 1 13 1c6 0 9 4 9 9v4H9c0 6 7 6 12 3v5c-8 4-18 1-18-7 0-5 4-7 6-8-1 1-1 2-1 3h8c0-6-10-5-14 1z"/></svg></button>
        <button aria-label="应用商店"><svg viewBox="0 0 24 24"><path d="M8 6V4c0-3 8-3 8 0v2" fill="none" stroke="#fff" stroke-width="1.500"/><path d="M1 6h22v17H1z" fill="#fff"/><path d="M7 9h5v5H7z" fill="#f04e1f"/><path d="M13 9h5v5h-5z" fill="#7eb900"/><path d="M7 15h5v5H7z" fill="#00a3ee"/><path d="M13 15h5v5h-5z" fill="#feb800"/></svg></button>
        <button aria-label="文件资源管理器"><svg viewBox="0 0 24 24"><path d="M1 4h9l2 3h11v14H1z" fill="#fddc83"/><path d="M1 9h22v12H1z" fill="#ffe9a0"/><path d="M5 22v-9h14v9h-4v-4H9v4z" fill="#35a9e0"/></svg></button>
        <button aria-label="Internet Explorer"><svg><use href="#l-ie"/></svg></button>
        <button class="running" aria-label="360浏览器"><svg viewBox="0 0 24 24"><circle cx="12" cy="12" r="10" fill="#44b52e" stroke="#d8f5d0" stroke-width="1.500"/><path d="M18 14c-1 3-3 4-6 4-4 0-6-3-6-6s2-6 6-6 6 3 6 7h-8c0 3 4 3 5 1zM10 11h4c0-3-4-3-4 0z" fill="#fff"/><path d="M1 20C2 11 13 1 22 1" fill="none" stroke="#9be883" stroke-width="1.500"/></svg></button>
        <button class="running active" aria-label="广联达"><svg><use href="#l-app"/></svg></button>
        <button class="running" aria-label="便笺"><svg viewBox="0 0 24 24"><rect width="24" height="24" rx="2" fill="#f09a1c"/><path d="M2 2h20v18H2z" fill="#f8c46c"/><path d="M3 5l13-1 2 15-11 2z" fill="#fff8e8"/><path d="M6 9l8-1M6 12l8-1M7 15l6-1" stroke="#b06a28"/><path d="M11 16L20 1l3 1-9 15-3 2z" fill="#c1401c"/></svg></button>
        <button class="running" aria-label="广联达G+"><svg viewBox="0 0 24 24"><path d="M23 2c-2 3-5 4-9 4-4 0-6 3-6 6s3 5 6 4c3 0 4-3 3-5 3-1 5 1 5 4 0 5-5 8-9 9 1-2 1-3-2-3C5 20 1 16 1 11 1 5 6 1 13 2c4 1 7 1 10 0z" fill="#1aa0f0"/></svg></button>
      </div>
      <div class="cpu">27%<br>CPU使用</div>
      <div class="tray">
        <svg viewBox="0 0 16 16"><path d="M2 11l6-6 6 6"/></svg>
        <svg viewBox="0 0 16 16"><path d="M.5 4.500h13v8H.5zM15.500 7v3"/><path d="M3 7h7v3H3z" fill="#fff"/></svg>
        <svg viewBox="0 0 16 16"><path d="M2 15C2 8 8 3 14 3M5 15c0-5 4-9 9-9M8 15c0-3 3-6 6-6M11 15c0-2 1-3 3-3" stroke="#ccc"/></svg>
        <svg class="keyboard" viewBox="0 0 24 16"><path d="M.5 1.500h23v12H.5z"/><path d="M3 4.500h18M3 7.500h18M6 10.500h12" stroke-dasharray="2 1"/></svg>
        <span>中</span>
        <svg><use href="#l-sogou"/></svg>
      </div>
      <div class="clock">12:38<br>2017/10/29</div>
      <button class="notice" aria-label="通知"><svg viewBox="0 0 28 24"><path d="M3 1h16v12H9l-3 3v-3H3z" fill="#fff"/><path d="M5 4.500h12M5 7.500h12M5 10.500h8" stroke="#000"/><circle cx="18" cy="16" r="8" fill="#333" stroke="#999"/><text x="18" y="21" text-anchor="middle">2</text></svg></button>
      <span class="peek"></span>
    </footer>
  </div>
</body>
</html>
```
FILE: styles.css
```css
* {
  box-sizing: border-box;
}
body {
  margin: 0;
  font-family: "Noto Sans", "Noto Sans CJK SC", sans-serif;
  font-size: 12px;
  line-height: 16px;
  color: #000;
  background-color: #f0f0f0;
}
button, select, input {
  font: inherit;
  color: inherit;
  margin: 0;
  padding: 0;
  border: none;
  background: none;
  border-radius: 0;
}
h1, h2, ul {
  margin: 0;
  padding: 0;
  font-size: 12px;
  font-weight: normal;
  list-style: none;
}
.sprite {
  position: absolute;
  width: 0;
  height: 0;
}
.window {
  display: flex;
  flex-direction: column;
  height: 100vh;
  overflow: hidden;
  position: relative;
}
.icon {
  width: 16px;
  height: 16px;
  flex: none;
}

/* title bar */
.titlebar {
  display: flex;
  align-items: center;
  height: 23px;
  flex: none;
  padding-left: 2px;
  gap: 5px;
  background-color: #fff;
}
.titlebar h1 {
  flex: 1;
  white-space: nowrap;
}
.window-controls {
  display: flex;
}
.window-controls button {
  width: 46px;
  height: 22px;
}
.window-controls svg {
  width: 12px;
  height: 12px;
  fill: none;
  stroke: #000;
}
.speed-ball {
  position: absolute;
  top: -28px;
  right: 180px;
  width: 46px;
  height: 46px;
  padding-top: 25px;
  border: 2px solid #c9cfca;
  border-radius: 50%;
  background-color: #3cb852;
  box-shadow: 0 2px 5px #888;
  color: #fff;
  font-weight: bold;
  text-align: center;
}

/* toolbars */
.row {
  display: flex;
  align-items: center;
  flex: none;
  gap: 3px;
  white-space: nowrap;
}
.menu-row, .file-row {
  height: 30px;
  padding: 0 1px;
}
.menu-row {
  gap: 0;
}
.menus {
  display: flex;
  padding: 0 5px 0 1px;
}
.menus button {
  padding: 0 6px 0 5px;
}
.panel {
  display: flex;
  align-items: center;
  height: 27px;
  padding-right: 1px;
  border-radius: 2px;
  background: linear-gradient(#fcfcfc, #f2f2f2);
}
.tip {
  flex: 188 1 0;
  justify-content: center;
  margin: 0 2px;
}
.tip a {
  color: #00686b;
  text-decoration: none;
}
.account {
  flex: 240 1 0;
  padding-left: 1px;
}
.file-tools {
  flex: 148 1 0;
}
.common-tools {
  flex: 550 1 0;
  padding-left: 3px;
}
.view-tools {
  flex: 661 1 0;
}
.tool {
  display: flex;
  align-items: center;
  gap: 4px;
  height: 23px;
  flex: none;
  padding: 0 3px 0 2px;
  border: 1px solid transparent;
}
.pressed {
  border-color: #0078d7;
  background-color: #e0ecf7;
}
.off {
  color: #808080;
}
.split::after, .drop::after, .arrow-only::after {
  content: "";
  border: 3px solid transparent;
  border-top-color: #000;
  border-bottom: none;
}
.split::after {
  margin-left: 2px;
}
.drop::after {
  margin-left: -2px;
}
.sep {
  width: 1px;
  height: 16px;
  margin: 0 0 0 4px;
  background-color: #bbb;
}
.grip {
  width: 3px;
  height: 15px;
  margin: 0 1px 0 3px;
  background: repeating-linear-gradient(#bbb 0 2px, transparent 2px 4px);
}
.more {
  align-self: flex-start;
  margin-left: auto;
  padding-right: 5px;
  font-size: 14px;
  font-weight: 600;
  line-height: 13px;
}
.combo {
  appearance: none;
  width: 69px;
  height: 23px;
  margin-right: 3px;
  padding: 0 14px 0 2px;
  overflow: hidden;
  text-overflow: clip;
  background: url("data:image/svg+xml,%3Csvg xmlns='http://www.w3.org/2000/svg' width='12' height='23'%3E%3Cpath fill='%23f4f4f4' d='M0 0h12v23H0z'/%3E%3Cpath d='M3 10h6l-3 3z'/%3E%3C/svg%3E") no-repeat right center #fff;
}
.combo.small {
  width: 58px;
}

/* body */
.body {
  display: flex;
  flex: 1;
  min-height: 0;
}
.workspace {
  display: flex;
  flex-direction: column;
  flex: 1;
  min-width: 0;
}
.edit-row, .component-row {
  height: 28px;
  padding-left: 1px;
}
.draw-row {
  height: 29px;
  padding: 0 2px 0 1px;
}
.grow {
  flex: 1;
}
.stub {
  width: 30px;
}

/* module navigator */
.sidebar {
  display: flex;
  flex-direction: column;
  width: 166px;
  margin: 1px 4px 1px 0;
  flex: none;
  font-family: "Liberation Serif", "Noto Sans CJK SC", serif;
}
.side-title {
  display: flex;
  align-items: center;
  height: 17px;
  flex: none;
  padding-right: 3px;
  gap: 6px;
  color: #fff;
  background-color: #0054e3;
}
.side-title h2 {
  flex: 1;
  font-size: 13px;
}
.side-title button {
  display: flex;
}
.side-title svg {
  width: 12px;
  height: 12px;
  fill: none;
  stroke: #fff;
}
.side-tab {
  height: 22px;
  flex: none;
  border: 1px solid #a0a0a0;
  border-top-color: #fff;
  background-color: #f0f0f0;
}
.side-tools {
  display: flex;
  align-items: center;
  gap: 7px;
  height: 27px;
  flex: none;
  padding: 3px 0 0 7px;
}
.side-tools button {
  display: flex;
}
.side-tools svg {
  width: 16px;
  height: 16px;
  fill: #008080;
  stroke: #000;
}
.tree {
  display: grid;
  grid-template-columns: 1fr 16px;
  grid-template-rows: 1fr 16px;
  flex: 1;
  min-height: 0;
  margin: 0 2px;
  padding: 1px;
  border: 1px solid #828790;
  background-color: #fff;
}
.nodes {
  min-height: 0;
  overflow: hidden;
}
.nodes button {
  display: flex;
  align-items: center;
  gap: 4px;
  height: 16px;
  padding-right: 5px;
  white-space: nowrap;
}
.nodes .node {
  padding-left: 7px;
}
.node .icon {
  margin: 0 1px 0 3px;
}
.chevron {
  width: 7px;
  height: 7px;
  border: solid #a0a0a0;
  border-width: 0 2px 2px 0;
  transform: rotate(-45deg);
}
.chevron.open {
  border-color: #404040;
  margin-bottom: 3px;
  transform: rotate(45deg);
}
.nodes ul {
  padding-left: 30px;
  background:
    repeating-linear-gradient(#888 0 1px, transparent 1px 2px) 11px 0 / 1px 100% no-repeat,
    repeating-linear-gradient(#888 0 1px, transparent 1px 2px) 30px 0 / 1px calc(100% - 8px) no-repeat;
}
.nodes ul li {
  display: flex;
  align-items: center;
}
.nodes ul li::before {
  content: "";
  width: 9px;
  height: 1px;
  flex: none;
  background: repeating-linear-gradient(90deg, #888 0 1px, transparent 1px 2px);
}
.nodes ul button {
  padding-left: 2px;
}
.nodes .selected {
  background-color: #d9d9d9;
}
.scroll {
  display: flex;
  background-color: #f0f0f0;
}
.scroll svg {
  width: 16px;
  height: 16px;
  flex: none;
  fill: none;
  stroke: #505050;
  stroke-width: 2;
}
.scroll .thumb {
  background-color: #cdcdcd;
}
.vertical {
  flex-direction: column;
  justify-content: space-between;
}
.vertical .thumb {
  height: 273px;
  margin-bottom: auto;
}
.horizontal .thumb {
  width: 102px;
  margin-right: 6px;
}
.horizontal {
  grid-column: 1 / 3;
}

/* drawing area */
.drawing {
  flex: 1;
  width: 100%;
  min-height: 0;
  background-color: #000;
}
.axis {
  stroke: #f00;
}
.aux {
  stroke: #780000;
}
.select {
  stroke: #fff;
  stroke-width: 2;
}
.head {
  fill: none;
  stroke: #008000;
}
.head-text {
  font: bold 14px "Liberation Mono", monospace;
  fill: #b4b4b4;
}
.triad {
  font-family: "Open Sans", sans-serif;
  font-size: 13px;
  font-weight: 300;
}

/* snap bar */
.snap-row {
  height: 32px;
  gap: 2px;
  padding: 0 0 2px 1px;
}
.snap-row .panel {
  padding-right: 2px;
}
.offsets label, .unit {
  color: #666;
  padding: 0 3px 0 1px;
}
.offsets .rotate {
  color: #000;
  padding: 0 4px 0 8px;
}
.offsets input[type="number"] {
  width: 58px;
  height: 23px;
  padding-right: 18px;
  border: 1px solid #767676;
  color: #707070;
  text-align: right;
  appearance: textfield;
  background: url("data:image/svg+xml,%3Csvg xmlns='http://www.w3.org/2000/svg' width='12' height='20' fill='%23555'%3E%3Cpath d='M2 6h6L5 3zM2 14h6l-3 3z'/%3E%3C/svg%3E") no-repeat right center #f4f4f4;
}
.offsets input::-webkit-inner-spin-button {
  appearance: none;
}
.offsets input.wide {
  width: 68px;
}
.offsets input[type="checkbox"] {
  appearance: none;
  width: 11px;
  height: 11px;
  margin-left: 2px;
  border: 1px solid #999;
}

/* status bar */
.status {
  display: flex;
  gap: 2px;
  height: 21px;
  flex: none;
  font-family: "Liberation Serif", "Noto Sans CJK SC", serif;
  white-space: nowrap;
}
.status span {
  height: 20px;
  padding: 2px 1px 0;
  border: 1px solid #d4d4d4;
  background: linear-gradient(#fff, #f0f0f0);
}
.status .coords {
  width: 148px;
}
.status .height {
  width: 78px;
}
.status .bottom {
  width: 98px;
}
.status .count {
  width: 48px;
}
.status .hint {
  flex: 1;
}
.status .fps {
  width: 70px;
}

/* input method bar */
.ime {
  display: flex;
  align-items: center;
  gap: 6px;
  position: absolute;
  left: 571px;
  top: 63px;
  height: 24px;
  padding-right: 4px;
  border: 1px solid #a9bfd6;
  border-left: none;
  background: #fff;
  color: #1d74c4;
  font-size: 15px;
  font-weight: bold;
}
.ime svg {
  width: 16px;
  height: 16px;
  fill: #1d74c4;
}
.ime .ime-logo {
  width: 27px;
  height: 28px;
  margin-top: -5px;
}
.ime .pale {
  fill: #b4c0d4;
}

/* taskbar */
.taskbar {
  display: flex;
  align-items: stretch;
  height: 40px;
  flex: none;
  color: #fff;
  background-color: #020b0d;
}
.taskbar svg {
  width: 24px;
  height: 24px;
}
.start {
  width: 48px;
  background-color: #000;
}
.taskbar .start svg {
  width: 16px;
  height: 16px;
  fill: #fff;
  vertical-align: middle;
}
.search {
  display: flex;
  align-items: center;
  width: 344px;
  padding: 0 14px 0 8px;
  gap: 4px;
  background-color: #333;
}
.search input {
  flex: 1;
  min-width: 0;
  font-size: 14px;
}
.search input::placeholder {
  color: #9a9a9a;
}
.cortana {
  fill: none;
  stroke: #fff;
  stroke-width: 3;
}
.taskbar .mic {
  width: 12px;
  height: 16px;
  fill: none;
  stroke: #aaa;
}
.apps {
  display: flex;
  flex: 1;
  gap: 1px;
}
.apps button {
  display: flex;
  align-items: center;
  justify-content: center;
  width: 48px;
}
.divider {
  width: 4px;
  height: 16px;
  margin: 12px 10px;
  border: solid #444;
  border-width: 0 1px;
}
.apps .running {
  background: linear-gradient(#76b9ed, #76b9ed) no-repeat center bottom / 40px 2px;
}
.apps .active {
  background-size: 48px 2px;
  background-color: #343e41;
}
.cpu, .clock {
  padding-top: 2px;
  text-align: center;
  line-height: 18px;
}
.cpu {
  width: 60px;
  margin-right: 16px;
}
.tray {
  display: flex;
  align-items: center;
  gap: 9px;
  padding-right: 12px;
  font-size: 14px;
}
.taskbar .tray svg {
  width: 16px;
  height: 16px;
  fill: none;
  stroke: #fff;
}
.taskbar .tray .keyboard {
  width: 24px;
}
.taskbar .tray svg:last-child {
  stroke: none;
}
.clock {
  width: 72px;
}
.notice {
  width: 48px;
}
.taskbar .notice svg {
  width: 28px;
  height: 24px;
  vertical-align: middle;
}
.notice text {
  fill: #fff;
  font-size: 13px;
  font-weight: bold;
}
.peek {
  width: 5px;
  border-left: 1px solid #555;
}
```
